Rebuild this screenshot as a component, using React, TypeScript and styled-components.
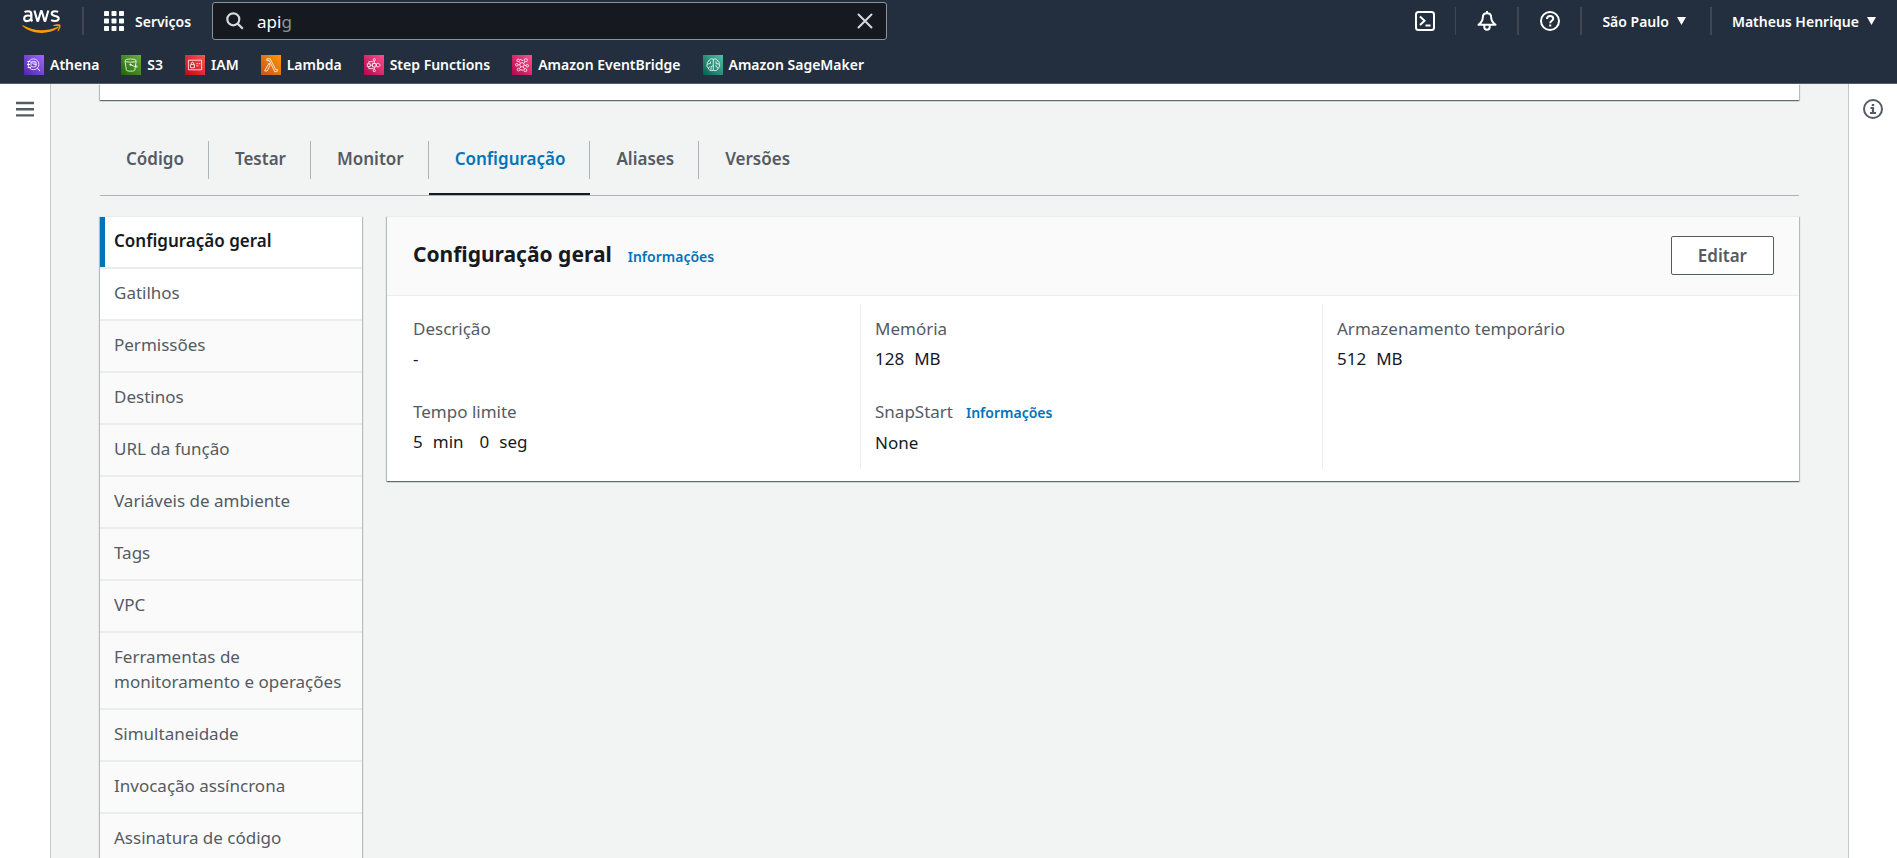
import React from 'react';
import styled, { createGlobalStyle } from 'styled-components';

const GlobalStyle = createGlobalStyle`
  * { box-sizing: border-box; }
  html, body { margin: 0; height: 100%; }
  #root { height: 100%; }
  body, button, input {
    font-family: "Noto Sans", "Open Sans", sans-serif;
    font-size: 17px;
    line-height: 25px;
  }
  body { background: #f2f3f3; color: #16191f; overflow: hidden; }
  a { text-decoration: none; color: inherit; }
  button { border: 0; background: none; padding: 0; color: inherit; cursor: pointer; }
  ul, dl, dd, h2 { margin: 0; padding: 0; list-style: none; }
  svg { display: block; flex: none; }
`;

const Page = styled.div`
  display: flex;
  flex-direction: column;
  height: 100vh;
`;

const Header = styled.header`
  flex: none;
  height: 84px;
  background: #232f3e;
  border-bottom: 1px solid #545b64;
  color: #fff;
  font-size: 14px;
  font-weight: 600;
`;

const TopRow = styled.div`
  display: flex;
  align-items: center;
  height: 42px;
  padding-right: 21px;
`;

const Logo = styled.a`
  padding: 0 20px 0 22px;
`;

const Separator = styled.span<{ $thin?: boolean }>`
  flex: none;
  width: ${(p) => (p.$thin ? 1 : 2)}px;
  height: 28px;
  background: #414750;
`;

const ServicesButton = styled.button`
  display: flex;
  align-items: center;
  gap: 11px;
  width: 128px;
  padding-left: 20px;
  font-size: 14px;
  font-weight: 600;
`;

const SearchBox = styled.label`
  display: flex;
  align-items: center;
  width: 675px;
  height: 38px;
  padding: 0 13px;
  border: 1px solid #879596;
  border-radius: 3px;
  background: #16191f;
`;

const SearchField = styled.span`
  position: relative;
  flex: 1;
  display: flex;
  margin-left: 13px;
  font-weight: 400;
`;

const SearchInput = styled.input`
  width: 100%;
  border: 0;
  outline: 0;
  padding: 0;
  background: transparent;
  color: #fff;
`;

const Completion = styled.span`
  position: absolute;
  inset: 0;
  color: #879596;
  font-size: 17px;
  pointer-events: none;
`;

const Typed = styled.span`
  visibility: hidden;
`;

const Tools = styled.div`
  display: flex;
  align-items: center;
  margin-left: auto;
`;

const IconButton = styled.button`
  display: grid;
  place-items: center;
  width: 61px;
`;

const MenuButton = styled.button<{ $last?: boolean }>`
  display: flex;
  align-items: center;
  gap: 8px;
  padding: 0 ${(p) => (p.$last ? 0 : 24)}px 0 20px;
  font-size: 14px;
  font-weight: 600;
`;

const Favorites = styled.nav`
  display: flex;
  align-items: center;
  gap: 22px;
  height: 41px;
  padding: 4px 24px 0;
`;

const Favorite = styled.a`
  display: flex;
  align-items: center;
  gap: 6px;
`;

const Body = styled.div`
  display: flex;
  flex: 1;
  min-height: 0;
`;

const Rail = styled.aside<{ $side: 'left' | 'right' }>`
  flex: none;
  display: flex;
  justify-content: center;
  align-items: flex-start;
  width: ${(p) => (p.$side === 'left' ? 51 : 49)}px;
  padding-top: 15px;
  background: #fff;
  color: #545b64;
  border-${(p) => (p.$side === 'left' ? 'right' : 'left')}: 1px solid #c3c8c8;
`;

const Main = styled.main`
  flex: 1;
  min-width: 0;
  overflow: hidden;
  padding: 0 49px;
`;

const Panel = styled.section`
  background: #fff;
  border-top: 1px solid #eaeded;
  box-shadow: 0 1px 1px 0 rgba(0, 28, 36, 0.4), 1px 1px 1px 0 rgba(0, 28, 36, 0.2), -1px 1px 1px 0 rgba(0, 28, 36, 0.2);
`;

const UpperPanel = styled(Panel)`
  height: 16px;
  border-top: 0;
`;

const Tabs = styled.ul`
  display: flex;
  height: 96px;
  padding-top: 28px;
  border-bottom: 1px solid #aab7b8;
`;

const TabItem = styled.li<{ $active?: boolean }>`
  display: flex;
  align-items: flex-start;
  padding-top: 13px;
  border-bottom: 2px solid ${(p) => (p.$active ? '#16191f' : 'transparent')};
  &:not(:last-child) > * { border-right: 1px solid #aab7b8; }
  & > * { color: ${(p) => (p.$active ? '#0073bb' : '#545b64')}; }
`;

const Tab = styled.button`
  height: 38px;
  padding: 0 24px 4px 26px;
  font-size: 17px;
  font-weight: 600;
`;

const Columns = styled.div`
  display: flex;
  align-items: flex-start;
  gap: 25px;
  margin-top: 20px;
`;

const SideNav = styled(Panel)`
  flex: none;
  width: 262px;
`;

const SideLink = styled.a<{ $active?: boolean; $white?: boolean }>`
  display: block;
  padding: 11px 12px 14px ${(p) => (p.$active ? 9 : 14)}px;
  border-left: ${(p) => (p.$active ? '5px solid #0073bb' : '0')};
  background: ${(p) => (p.$active || p.$white ? '#fff' : '#fafafa')};
  color: ${(p) => (p.$active ? '#16191f' : '#545b64')};
  font-weight: ${(p) => (p.$active ? 600 : 400)};
`;

const SideItem = styled.li`
  border-bottom: 2px solid #eaeded;
`;

const Card = styled(Panel)`
  flex: 1;
  min-width: 0;
`;

const CardHeader = styled.div`
  display: flex;
  align-items: center;
  height: 79px;
  padding: 0 25px 2px 26px;
  background: #fafafa;
  border-bottom: 1px solid #eaeded;
`;

const CardTitle = styled.h2`
  font-size: 21px;
  font-weight: 700;
`;

const InfoLink = styled.a`
  color: #0073bb;
  font-size: 14px;
  font-weight: 600;
`;

const TitleGroup = styled.div`
  display: flex;
  align-items: baseline;
  gap: 16px;
`;

const EditButton = styled.button`
  margin-left: auto;
  height: 39px;
  padding: 0 26px;
  border: 1px solid #545b64;
  border-radius: 2px;
  background: #fff;
  color: #545b64;
  font-weight: 600;
`;

const Details = styled.dl`
  display: grid;
  grid-template-columns: repeat(3, 1fr);
  padding: 8px 14px 12px 12px;
`;

const DetailColumn = styled.div`
  display: flex;
  flex-direction: column;
  gap: 28px;
  padding: 12px 14px 14px;
  &:not(:last-child) { border-right: 1px solid #eaeded; }
`;

const DetailLabel = styled.dt`
  display: flex;
  align-items: baseline;
  gap: 13px;
  margin-bottom: 5px;
  color: #545b64;
`;

const DetailValue = styled.dd`
  display: flex;
  gap: 16px;
`;

const Amount = styled.span`
  display: flex;
  gap: 10px;
`;

const TileSvg = ({ id, from, to, children }: { id: string; from: string; to: string; children: React.ReactNode }) => (
  <svg width="20" height="20" viewBox="0 0 20 20" fill="none" stroke="#fff" strokeWidth="0.8">
    <defs>
      <linearGradient id={id} x1="0" y1="1" x2="1" y2="0">
        <stop offset="0" stopColor={from} />
        <stop offset="1" stopColor={to} />
      </linearGradient>
    </defs>
    <rect width="20" height="20" fill={`url(#${id})`} stroke="none" />
    {children}
  </svg>
);

const favorites = [
  {
    name: 'Athena', from: '#4d27a8', to: '#a166ff',
    art: <><circle cx="9.5" cy="9.3" r="5.4" /><path d="M13.4 13.2 16 16M3.4 6.4h3M3 9.4h3M3.6 12.4h3.4" strokeWidth="1" /><path d="M7 7.2v4c0 1 5 1 5 0v-4" /><ellipse cx="9.5" cy="7.2" rx="2.5" ry="0.9" /><path d="M9.4 9l3.4 1" /></>,
  },
  {
    name: 'S3', from: '#1b660f', to: '#6cae3e',
    art: <><ellipse cx="9.6" cy="5.6" rx="5.6" ry="1.6" /><path d="M4 5.8l1.4 9.4c.3 1.3 8.1 1.3 8.4 0L15.2 5.8M9.8 9.8l5.2 2.2c1.7.6 1.9-.5-.3-1.8" /><circle cx="9.5" cy="9.6" r=".7" fill="#fff" /></>,
  },
  {
    name: 'IAM', from: '#bd0816', to: '#ff5252',
    art: <><path d="M3.4 5.2h13.2v9.6H3.4z" /><path d="M5.6 9.4h3.8v3.4H5.6zM6.4 9.4V8.3c0-1.5 2.2-1.5 2.2 0v1.1M11.4 8.6h1.4M13.8 8.6h1.4M11.4 10.8h1.8" /></>,
  },
  {
    name: 'Lambda', from: '#c8511b', to: '#ff9900',
    art: <path d="M5.8 3.8h3.4l5.6 11 1.4-.5.7 1.5-3 1.1L8.3 5.5H5.8zM8 8.2l1 2L6.2 16H3.6z" />,
  },
  {
    name: 'Step Functions', from: '#b0084d', to: '#ff4f8b',
    art: <><circle cx="10.3" cy="4.8" r="1.1" /><circle cx="10.3" cy="15.6" r="1.1" /><path d="M8.5 8.5h3.6v3.4H8.5zM3.3 8.8h3v2.8h-3zM14 7.9l2.4 2.2-2.4 2.2-2.4-2.2zM10.3 6v2.5M10.3 12v2.5M6.3 10.2h2.2M4.8 8.8V6.7h4.6M4.8 11.600v2h4.6" /></>,
  },
  {
    name: 'Amazon EventBridge', from: '#b0084d', to: '#ff4f8b',
    art: <><circle cx="6.2" cy="5.4" r="1.3" /><circle cx="13.8" cy="5.2" r="1.6" /><circle cx="4.8" cy="9.8" r="1.3" /><circle cx="15.2" cy="10.8" r="1.3" /><circle cx="6.6" cy="14.5" r="1.4" /><circle cx="13.3" cy="15.2" r="1.5" /><circle cx="10" cy="9.8" r="2.2" /><path d="M8 4.400l3 1.200M7 6.600l1.400 1.600M13 6.800l-1.400 1.400M6.200 9.800h1.600M12 10.200l2 .4M9 11.800l-1.400 1.600M11 11.800l1.400 2M8 14.800l3 .4" /></>,
  },
  {
    name: 'Amazon SageMaker', from: '#055f4e', to: '#56c0a7',
    art: <path d="M10 4.200c-2-1-3.800.2-4 1.700C4.200 6.400 4 8 4.400 9c-1 1.200-.6 3.300.8 3.900.1 2 2.800 3.400 4.800 2.500M10.500 4.200c2-1 3.800.2 4 1.700C16.300 6.400 16.500 8 16.100 9c1 1.200.6 3.300-.8 3.900-.1 2-2.800 3.400-4.800 2.500M10.300 4v11.800M4.500 9.200l3-.8V6.500M5.300 12.900l2-1.400M8 15v-3.200l2-1.300M16 9.200l-3-.8V6.500M15 12.900l-2-1.400V9.800" />,
  },
];

const AwsLogo = () => (
  <svg width="40" height="27" viewBox="0 0 40 27" role="img" aria-label="aws">
    <g fill="none" stroke="#fff" strokeWidth="2.1" strokeLinejoin="round">
      <path d="M2.6 4.2c1-.7 2.4-1 3.500-1 2.400 0 3.300 1.100 3.300 3.200v4.400c0 1 .2 1.700.7 2.600M9.300 8c-1.100-.3-2.300-.5-3.300-.5-2.500 0-3.800 1.200-3.800 2.900 0 1.700 1.100 2.700 2.900 2.700 1.900 0 3.500-1 4.200-2.900" />
      <path d="M12.400 2.500l3 10.500h.7L19 3h.7l2.900 10h.7l3-10.500" />
      <path d="M36.100 3.900c-.9-.5-2-.7-3.200-.7-2.100 0-3.200.9-3.200 2.200 0 3.400 7 1.700 7 4.900 0 1.800-1.500 2.700-3.600 2.700-1.500 0-2.900-.3-4-.9" />
    </g>
    <path d="M.4 17.600c.2-.4.6-.4 1-.2 10.600 6 22.500 6.200 33.700 1.500.9-.4 1.600.6.8 1.200C25.800 27.300 10 26.400.6 18.300c-.3-.2-.3-.5-.2-.7z" fill="#f90" />
    <path d="M31.400 17.300c2.300-1.600 6.500-1.300 7-.6.5.7-.2 4.700-2.300 6.500-.4.3-.7.1-.6-.2.500-1.300 1.600-4 1.100-4.700-.5-.6-3.300-.4-4.900-.2-.5.100-.6-.4-.3-.8z" fill="#f90" />
  </svg>
);

const GridIcon = () => (
  <svg width="20" height="20" viewBox="0 0 20 20" fill="#fff">
    {[0, 7.5, 15].map((y) => [0, 7.5, 15].map((x) => <rect key={`${x}-${y}`} x={x} y={y} width="5" height="5" rx="0.8" />))}
  </svg>
);

const SearchIcon = () => (
  <svg width="18" height="18" viewBox="0 0 18 18" fill="none" stroke="#d5dbdb" strokeWidth="2.2">
    <circle cx="7.3" cy="7.3" r="6" />
    <path d="M11.600 11.600l5.200 5.200" />
  </svg>
);

const CloseIcon = () => (
  <svg width="16" height="16" viewBox="0 0 16 16" fill="none" stroke="#d5dbdb" strokeWidth="2" strokeLinecap="round">
    <path d="M1.500 1.500l13 13M14.500 1.500l-13 13" />
  </svg>
);

const ShellIcon = () => (
  <svg width="20" height="20" viewBox="0 0 20 20" fill="none" stroke="#fff" strokeWidth="2">
    <rect x="1" y="1" width="18" height="18" rx="2.5" />
    <path d="M5 5.500l4.500 4.300L5 14M10.500 14.500h5" />
  </svg>
);

const BellIcon = () => (
  <svg width="20" height="20" viewBox="0 0 20 20" fill="none" stroke="#fff" strokeWidth="2" strokeLinejoin="round">
    <path d="M10 0v2M10 2.200c-2.700 0-4.200 1.900-4.200 4.300 0 3.300-1.200 4.800-4.300 7.300h17c-3.100-2.500-4.300-4-4.300-7.300 0-2.400-1.500-4.300-4.200-4.300z" />
    <path d="M7.300 14v2a2.700 2.700 0 0 0 5.400 0v-2" />
  </svg>
);

const HelpIcon = () => (
  <svg width="20" height="20" viewBox="0 0 20 20" fill="none" stroke="#fff" strokeWidth="2">
    <circle cx="10" cy="10" r="9" />
    <path d="M7 8c0-4 6.200-3.700 6.200-.3 0 2.200-3 2-3 4.600M10.200 13.500v2" />
  </svg>
);

const Caret = () => (
  <svg width="9" height="8" viewBox="0 0 9 8" fill="#fff"><path d="M0 0h9L4.500 8z" /></svg>
);

const MenuIcon = () => (
  <svg width="18" height="20" viewBox="0 0 18 20" stroke="#545b64" strokeWidth="2.4"><path d="M0 4h18M0 10.200h18M0 16.400h18" /></svg>
);

const InfoIcon = () => (
  <svg width="20" height="20" viewBox="0 0 20 20" fill="none" stroke="#545b64" strokeWidth="2">
    <circle cx="10" cy="10" r="9" />
    <path d="M8.800 6h2.400M7.500 9h3.500M10 8.500v6M7 14h6" strokeWidth="2.2" />
  </svg>
);

const tabs = ['Código', 'Testar', 'Monitor', 'Configuração', 'Aliases', 'Versões'];

const sections = [
  'Configuração geral', 'Gatilhos', 'Permissões', 'Destinos', 'URL da função', 'Variáveis de ambiente',
  'Tags', 'VPC', 'Ferramentas de monitoramento e operações', 'Simultaneidade', 'Invocação assíncrona',
  'Assinatura de código',
];

const details: { label: string; info?: boolean; value: string[][] }[][] = [
  [{ label: 'Descrição', value: [['-']] }, { label: 'Tempo limite', value: [['5', 'min'], ['0', 'seg']] }],
  [{ label: 'Memória', value: [['128', 'MB']] }, { label: 'SnapStart', info: true, value: [['None']] }],
  [{ label: 'Armazenamento temporário', value: [['512', 'MB']] }],
];

export default function App() {
  const [query, setQuery] = React.useState('api');
  return (
    <Page>
      <GlobalStyle />
      <Header>
        <TopRow>
          <Logo href="#"><AwsLogo /></Logo>
          <Separator />
          <ServicesButton><GridIcon />Serviços</ServicesButton>
          <SearchBox>
            <SearchIcon />
            <SearchField>
              <SearchInput aria-label="Pesquisar" value={query} onChange={(e) => setQuery(e.target.value)} />
              {query === 'api' && <Completion><Typed>api</Typed>g</Completion>}
            </SearchField>
            <button aria-label="Limpar" onClick={() => setQuery('')}><CloseIcon /></button>
          </SearchBox>
          <Tools>
            <IconButton aria-label="CloudShell"><ShellIcon /></IconButton>
            <Separator $thin />
            <IconButton aria-label="Notificações"><BellIcon /></IconButton>
            <Separator />
            <IconButton aria-label="Ajuda"><HelpIcon /></IconButton>
            <Separator />
            <MenuButton>São Paulo<Caret /></MenuButton>
            <Separator />
            <MenuButton $last>Matheus Henrique<Caret /></MenuButton>
          </Tools>
        </TopRow>
        <Favorites>
          {favorites.map((f) => (
            <Favorite href="#" key={f.name}>
              <TileSvg id={f.name.replace(/ /g, '')} from={f.from} to={f.to}>{f.art}</TileSvg>
              {f.name}
            </Favorite>
          ))}
        </Favorites>
      </Header>
      <Body>
        <Rail $side="left"><button aria-label="Menu"><MenuIcon /></button></Rail>
        <Main>
          <UpperPanel />
          <Tabs>
            {tabs.map((t) => (
              <TabItem key={t} $active={t === 'Configuração'}><Tab>{t}</Tab></TabItem>
            ))}
          </Tabs>
          <Columns>
            <SideNav as="nav">
              <ul>
                {sections.map((s, i) => (
                  <SideItem key={s}><SideLink href="#" $active={i === 0} $white={i === 1}>{s}</SideLink></SideItem>
                ))}
              </ul>
            </SideNav>
            <Card>
              <CardHeader>
                <TitleGroup>
                  <CardTitle>Configuração geral</CardTitle>
                  <InfoLink href="#">Informações</InfoLink>
                </TitleGroup>
                <EditButton>Editar</EditButton>
              </CardHeader>
              <Details>
                {details.map((column) => (
                  <DetailColumn key={column[0].label}>
                    {column.map((d) => (
                      <div key={d.label}>
                        <DetailLabel>{d.label}{d.info && <InfoLink href="#">Informações</InfoLink>}</DetailLabel>
                        <DetailValue>
                          {d.value.map((pair) => (
                            <Amount key={pair.join()}>{pair.map((w) => <span key={w}>{w}</span>)}</Amount>
                          ))}
                        </DetailValue>
                      </div>
                    ))}
                  </DetailColumn>
                ))}
              </Details>
            </Card>
          </Columns>
        </Main>
        <Rail $side="right"><button aria-label="Informações"><InfoIcon /></button></Rail>
      </Body>
    </Page>
  );
}
